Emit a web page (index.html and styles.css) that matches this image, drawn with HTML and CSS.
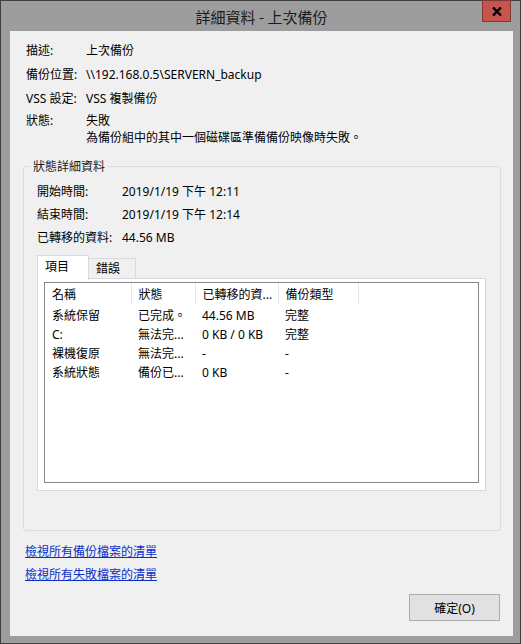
FILE: index.html
```html
<!DOCTYPE html>
<html lang="zh-Hant">
<head>
  <meta charset="UTF-8" />
  <title>詳細資料 - 上次備份</title>
  <link rel="stylesheet" href="styles.css">
</head>
<body>
  <div class="window">
    <!-- Barra de título -->
    <div class="titlebar">
      <span class="title">詳細資料 - 上次備份</span>
      <button class="close" aria-label="關閉">
        <svg width="10" height="9" viewBox="0 0 10 9"><path d="M1 0.5 L9 8.5 M9 0.5 L1 8.5" stroke="#000" stroke-width="2.4" fill="none"/></svg>
      </button>
    </div>

    <div class="client">
      <!-- Datos generales -->
      <div class="info">
        <span>描述:</span><span>上次備份</span>
        <span>備份位置:</span><span>\\192.168.0.5\SERVERN_backup</span>
        <span>VSS 設定:</span><span>VSS 複製備份</span>
        <span class="status-label">狀態:</span>
        <span class="status-label">失敗<br>為備份組中的其中一個磁碟區準備備份映像時失敗。</span>
      </div>

      <!-- Detalle del estado -->
      <fieldset class="group">
        <legend>狀態詳細資料</legend>
        <div class="info detail">
          <span>開始時間:</span><span>2019/1/19 下午 12:11</span>
          <span>結束時間:</span><span>2019/1/19 下午 12:14</span>
          <span>已轉移的資料:</span><span>44.56 MB</span>
        </div>

        <div class="tabs">
          <span class="tab active">項目</span>
          <span class="tab">錯誤</span>
        </div>
        <div class="tab-panel">
          <div class="listview">
            <table class="list">
              <thead>
                <tr><th class="c1">名稱</th><th class="c2">狀態</th><th class="c3">已轉移的資...</th><th class="c4">備份類型</th><th></th></tr>
              </thead>
              <tbody>
                <tr><td>系統保留</td><td>已完成。</td><td>44.56 MB</td><td>完整</td><td></td></tr>
                <tr><td>C:</td><td>無法完...</td><td>0 KB / 0 KB</td><td>完整</td><td></td></tr>
                <tr><td>裸機復原</td><td>無法完...</td><td>-</td><td>-</td><td></td></tr>
                <tr><td>系統狀態</td><td>備份已...</td><td>0 KB</td><td>-</td><td></td></tr>
              </tbody>
            </table>
          </div>
        </div>
      </fieldset>

      <!-- Enlaces -->
      <div class="links">
        <a href="#">檢視所有備份檔案的清單</a>
        <a href="#">檢視所有失敗檔案的清單</a>
      </div>

      <div class="actions">
        <button class="ok">確定(O)</button>
      </div>
    </div>
  </div>
</body>
</html>
```

FILE: styles.css
```css
body {
  margin: 0;
  background: #fff;
  font-family: 'Noto Sans', 'Noto Sans CJK TC', sans-serif;
  font-size: 12px;
  color: #000;
}

.window {
  width: 521px;
  height: 644px;
  box-sizing: border-box;
  border: 1px solid #3f3f3f;
  background: #9d9d9d;
  display: flex;
  flex-direction: column;
}

/* Barra de título */
.titlebar {
  height: 30px;
  position: relative;
  display: flex;
  justify-content: center;
  align-items: center;
}

.title {
  font-family: 'Noto Sans CJK TC', sans-serif;
  font-size: 15px;
  color: #1a1a1a;
  margin-left: 2px;
}

.close {
  position: absolute;
  top: -1px;
  right: 9px;
  width: 29px;
  height: 22px;
  padding: 0;
  border: 1px solid #7d3a36;
  background: #c8554c;
  display: flex;
  justify-content: center;
  align-items: center;
}

.client {
  flex: 1;
  margin: 0 7px 7px 9px;
  background: #f0f0f0;
  display: flex;
  flex-direction: column;
}

/* Datos generales */
.info {
  display: grid;
  grid-template-columns: 60px 1fr;
  row-gap: 7px;
  line-height: 17px;
  padding: 11px 0 0 16px;
}

.status-label {
  margin-top: -2px;
}

/* Detalle del estado */
.group {
  margin: 12px 12px 0 13px;
  padding: 0 0 39px 0;
  border: 1px solid #dcdcdc;
  border-radius: 3px;
  min-width: 0;
}

.group legend {
  margin-left: 7px;
  padding: 0 2px;
  line-height: 17px;
  color: #1a1a1a;
}

.detail {
  grid-template-columns: 85px 1fr;
  row-gap: 6px;
  padding: 8px 0 0 13px;
}

.tabs {
  display: flex;
  align-items: flex-end;
  margin: 9px 0 0 13px;
  height: 24px;
  position: relative;
  z-index: 1;
}

.tab {
  box-sizing: border-box;
  height: 20px;
  line-height: 19px;
  padding: 0 7px;
  border: 1px solid #d9d9d9;
  border-bottom: none;
  background: #f0f0f0;
  margin-bottom: 1px;
}

.tab.active {
  height: 25px;
  width: 52px;
  line-height: 22px;
  padding-left: 7px;
  background: #fff;
  margin-bottom: -1px;
  align-self: flex-start;
  margin-top: 0;
}

.tab.active + .tab {
  margin-left: -1px;
  width: 48px;
}

.tab-panel {
  margin: -1px 14px 0 13px;
  height: 213px;
  box-sizing: border-box;
  border: 1px solid #d9d9d9;
  background: #fff;
  padding: 3px 6px 7px 6px;
}

.listview {
  height: 100%;
  box-sizing: border-box;
  border: 1px solid #828790;
  background: #fff;
}

.list {
  border-collapse: collapse;
  width: 100%;
  table-layout: fixed;
}

.list th {
  box-sizing: border-box;
  font-weight: normal;
  text-align: left;
  height: 21px;
  padding: 0 0 0 7px;
  border-right: 1px solid #e5e5e5;
  white-space: nowrap;
  overflow: hidden;
}

.list th:last-child {
  border-right: none;
}

.list .c1 { width: 86px; }
.list .c2 { width: 64px; }
.list .c3 { width: 83px; }
.list .c4 { width: 80px; }

.list td {
  height: 19px;
  padding: 0 0 0 7px;
  line-height: 19px;
  white-space: nowrap;
  overflow: hidden;
}

.list tbody tr:first-child td {
  height: 20px;
  padding-top: 1px;
}

/* Enlaces */
.links {
  display: flex;
  flex-direction: column;
  align-items: flex-start;
  gap: 6px;
  margin: 11px 0 0 15px;
  line-height: 17px;
}

.links a {
  color: #0b2fc8;
  font-family: 'Noto Sans CJK TC', sans-serif;
}

.actions {
  margin-top: auto;
  display: flex;
  justify-content: flex-end;
  padding: 0 13px 15px 0;
}

.ok {
  width: 91px;
  height: 27px;
  border: 1px solid #adadad;
  background: #e1e1e1;
  font-family: 'Noto Sans', 'Noto Sans CJK TC', sans-serif;
  font-size: 12px;
  color: #000;
  padding: 0;
}
```
